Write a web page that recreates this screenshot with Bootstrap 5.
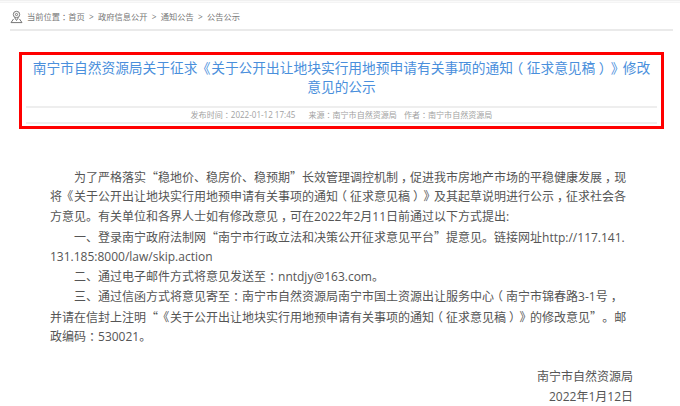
<!DOCTYPE html>
<html lang="zh">
<head>
<meta charset="utf-8">
<title>公告公示</title>
<link rel="stylesheet" href="https://cdn.jsdelivr.net/npm/bootstrap@5.3.0/dist/css/bootstrap.min.css">
<style>
html,body{height:406px;overflow:hidden;background:#fff}
body{font-family:"Open Sans","Noto Sans CJK SC",sans-serif;color:#555;text-spacing-trim:space-all}
.topline{height:3px;border-top:1px solid #f0f0f0;border-bottom:1px solid #f4f4f4;background:#fafafa}
.crumbs{margin:0 7px 0 10px;height:28px;border-bottom:2px solid #eaeaea;font-size:8.25px;color:#777;padding-top:2px}
.crumbs svg{width:13px;height:14px;flex:none}
.redbox{margin:21px 16px 0 19px;height:77px;border:3.5px solid #f00;padding:0 4px}
.arttitle{font-size:13.72px;line-height:18.6px;color:#4a8fdc;text-align:center;margin:0;padding-top:4px;height:51px;font-weight:400;white-space:nowrap}
.artmeta{height:18px;border-top:2px solid #eee;border-bottom:2px solid #eee;font-size:8.05px;color:#a2a2a2;line-height:1}
.artmeta>span:first-child{margin-right:13px}
.artmeta>span:last-child{margin-left:7px}
.artbody{margin:38px 0 0 50px;width:590px;font-size:12px;line-height:20px;color:#555;white-space:nowrap}
.artbody p{margin:0;height:20px}
.ind{padding-left:24px}
.signoff{margin:20px 47px 0 0;font-size:12px;line-height:20px;color:#555;text-align:right}
.signoff p{margin:0}
.qt{font-family:"Noto Sans CJK SC",sans-serif}
.ctr,.ob,.cb{font-feature-settings:"halt"}
.ctr{padding:0 .25em}
.ob{padding:0 .06em 0 .44em}
.cb{padding:0 .38em 0 .12em}
</style>
</head>
<body>
<div class="topline"></div>
<div class="crumbs d-flex align-items-center gap-1">
<svg viewBox="0 0 13 14" fill="none" stroke="#777" stroke-width="1"><circle cx="6.5" cy="4.5" r="3.2"/><circle cx="6.5" cy="4.5" r="1.1"/><path d="M4.5 7.5 6.5 10.5 8.5 7.5"/><path d="M3.5 9 1 12.6h11L9.5 9"/></svg>
<span>当前位置<span class="ctr">：</span>首页 &nbsp;&gt;&nbsp; 政府信息公开 &nbsp;&gt;&nbsp; 通知公告 &nbsp;&gt;&nbsp; 公告公示</span>
</div>
<div class="redbox">
<h1 class="arttitle">南宁市自然资源局关于征求<span class="ob">《</span>关于公开出让地块实行用地预申请有关事项的通知<span class="ctr">（</span>征求意见稿<span class="ctr">）</span><span class="cb">》</span>修改<br>意见的公示</h1>
<div class="artmeta d-flex justify-content-center align-items-center">
<span>发布时间<span class="ctr">：</span>2022-01-12 17:45</span><span>来源<span class="ctr">：</span>南宁市自然资源局</span><span>作者<span class="ctr">：</span>南宁市自然资源局</span>
</div>
</div>
<div class="artbody">
<p class="ind">为了严格落实<span class="qt">“</span>稳地价、稳房价、稳预期<span class="qt">”</span>长效管理调控机制<span class="ctr">，</span>促进我市房地产市场的平稳健康发展<span class="ctr">，</span>现</p>
<p>将<span class="ob">《</span>关于公开出让地块实行用地预申请有关事项的通知<span class="ctr">（</span>征求意见稿<span class="ctr">）</span><span class="cb">》</span>及其起草说明进行公示<span class="ctr">，</span>征求社会各</p>
<p>方意见。有关单位和各界人士如有修改意见<span class="ctr">，</span>可在2022年2月11日前通过以下方式提出:</p>
<p class="ind">一、登录南宁政府法制网<span class="qt">“</span>南宁市行政立法和决策公开征求意见平台<span class="qt">”</span>提意见。链接网址http://117.141.</p>
<p>131.185:8000/law/skip.action</p>
<p class="ind">二、通过电子邮件方式将意见发送至<span class="ctr">：</span>nntdjy@163.com。</p>
<p class="ind">三、通过信函方式将意见寄至<span class="ctr">：</span>南宁市自然资源局南宁市国土资源出让服务中心<span class="ctr">（</span>南宁市锦春路3-1号<span class="ctr">，</span></p>
<p>并请在信封上注明<span class="qt">“</span><span class="ob">《</span>关于公开出让地块实行用地预申请有关事项的通知<span class="ctr">（</span>征求意见稿<span class="ctr">）</span><span class="cb">》</span>的修改意见<span class="qt">”</span>。邮</p>
<p>政编码<span class="ctr">：</span>530021。</p>
</div>
<div class="signoff">
<p>南宁市自然资源局</p>
<p>2022年1月12日</p>
</div>
<script src="https://cdn.jsdelivr.net/npm/bootstrap@5.3.0/dist/js/bootstrap.bundle.min.js"></script>
</body>
</html>
